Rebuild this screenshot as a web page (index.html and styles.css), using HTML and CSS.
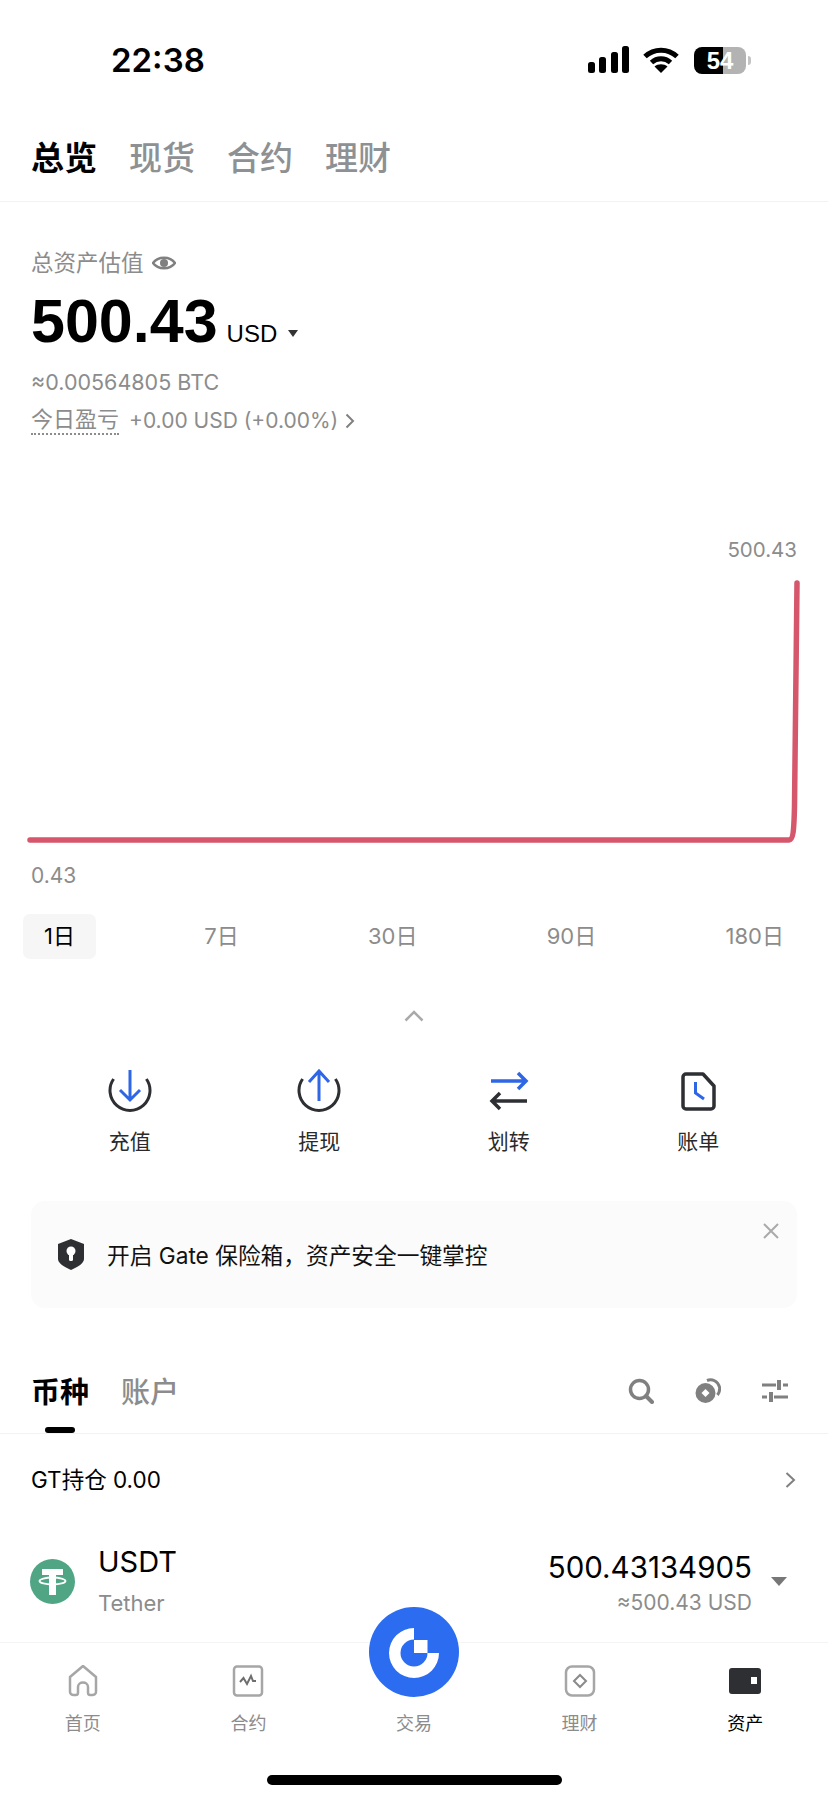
FILE: index.html
```html
<!DOCTYPE html>
<html lang="zh-CN">
<head>
  <meta charset="UTF-8" />
  <meta name="viewport" content="width=device-width, initial-scale=1.0" />
  <title>资产</title>
  <link rel="stylesheet" href="styles.css">
</head>
<body>
<div class="page">
  <div class="statusbar">
    <span class="time">22:38</span>
    <div class="status-icons">
      <svg class="signal" width="42" height="28" viewBox="0 0 42 28"><rect x="1" y="16" width="7" height="11" rx="2.5"/><rect x="12" y="11" width="7" height="16" rx="2.5"/><rect x="24" y="6" width="7" height="21" rx="2.5"/><rect x="35" y="0" width="7" height="27" rx="2.5"/></svg>
      <svg class="wifi" width="36" height="28" viewBox="0 0 36 28"><path d="M2 10.5C11 2 25 2 34 10.5" fill="none" stroke="#000" stroke-width="5"/><path d="M8.500 16.500C14 11.500 22 11.500 27.500 16.500" fill="none" stroke="#000" stroke-width="5"/><path d="M18 27L11.500 20.500C15 17.500 21 17.500 24.500 20.500Z"/></svg>
      <div class="battery">54</div>
      <div class="battery-cap"></div>
    </div>
  </div>

  <div class="top-tabs">
    <span class="active">总览</span>
    <span>现货</span>
    <span>合约</span>
    <span>理财</span>
  </div>

  <div class="summary">
    <div class="summary-label">总资产估值
      <svg width="24" height="16" viewBox="0 0 24 16"><path d="M1 8C6 1 18 1 23 8C18 15 6 15 1 8Z" fill="none" stroke="#808080" stroke-width="2.500"/><circle cx="12" cy="8" r="4" fill="#808080"/></svg>
    </div>
    <div class="balance"><span class="balance-num">500.43</span><span class="balance-unit">USD</span><i class="tri"></i></div>
    <div class="btc">≈0.00564805 BTC</div>
    <div class="pnl"><span class="pnl-label">今日盈亏</span><span class="pnl-val">+0.00 USD (+0.00%)</span>
      <svg width="10" height="16" viewBox="0 0 10 16"><path d="M1.500 1.500L8 8L1.500 14.500" fill="none" stroke="#808080" stroke-width="2"/></svg>
    </div>
  </div>

  <div class="chart-max">500.43</div>
  <svg class="chart" width="828" height="270" viewBox="0 0 828 270">
    <path d="M30 264H789C793 264 794 255 794.500 230C795.500 150 796.500 70 797 7" fill="none" stroke="#d6566b" stroke-width="5.500" stroke-linecap="round"/>
  </svg>
  <div class="chart-min">0.43</div>

  <div class="ranges">
    <span class="active">1日</span>
    <span>7日</span>
    <span>30日</span>
    <span>90日</span>
    <span>180日</span>
  </div>

  <svg class="collapse" width="20" height="12" viewBox="0 0 20 12"><path d="M1.500 10.500L10 2L18.500 10.500" fill="none" stroke="#aaa" stroke-width="2.500"/></svg>

  <div class="actions">
    <div class="action">
      <svg width="44" height="44" viewBox="0 0 44 44"><path d="M5.600 10A20 20 0 1 0 38.400 10" fill="none" stroke="#2d2f33" stroke-width="3"/><path d="M22 1V31M12 21L22 31L32 21" fill="none" stroke="#2e66e5" stroke-width="3"/></svg>
      <span>充值</span>
    </div>
    <div class="action">
      <svg width="44" height="44" viewBox="0 0 44 44"><path d="M5.600 10A20 20 0 1 0 38.400 10" fill="none" stroke="#2d2f33" stroke-width="3"/><path d="M22 32V2M12 13L22 2L32 13" fill="none" stroke="#2e66e5" stroke-width="3"/></svg>
      <span>提现</span>
    </div>
    <div class="action">
      <svg width="44" height="44" viewBox="0 0 44 44"><path d="M4 12H39M31 4L39 12L31 20" fill="none" stroke="#2e66e5" stroke-width="3.500"/><path d="M40 32H5M13 24L5 32L13 40" fill="none" stroke="#2d2f33" stroke-width="3.500"/></svg>
      <span>划转</span>
    </div>
    <div class="action">
      <svg width="44" height="44" viewBox="0 0 44 44"><path d="M10 5H27L38 17V37A3 3 0 0 1 35 40H10A3 3 0 0 1 7 37V8A3 3 0 0 1 10 5Z" fill="none" stroke="#2d2f33" stroke-width="3.500" stroke-linejoin="round"/><path d="M19.500 13V24L28 30" fill="none" stroke="#2e66e5" stroke-width="3"/></svg>
      <span>账单</span>
    </div>
  </div>

  <div class="banner">
    <svg class="shield" width="28" height="31" viewBox="0 0 28 31"><path d="M14 0L27 5V20C27 24 21 28 14 31C7 28 1 24 1 20V5Z" fill="#2d2f33"/><circle cx="14" cy="12" r="4.500" fill="#fff"/><rect x="12" y="12" width="4" height="10" rx="1.500" fill="#fff"/></svg>
    <span class="banner-text">开启 Gate 保险箱，资产安全一键掌控</span>
    <svg class="banner-close" width="16" height="16" viewBox="0 0 16 16"><path d="M1 1L15 15M15 1L1 15" stroke="#aaa" stroke-width="2"/></svg>
  </div>

  <div class="asset-head">
    <div class="asset-tab active">币种<i></i></div>
    <div class="asset-tab">账户</div>
    <div class="asset-tools">
      <svg width="26" height="26" viewBox="0 0 26 26"><circle cx="11.500" cy="11.500" r="9" fill="none" stroke="#808080" stroke-width="3.500"/><path d="M18 18L24 24" stroke="#808080" stroke-width="4" stroke-linecap="round"/></svg>
      <svg width="26" height="26" viewBox="0 0 26 26"><circle cx="10.500" cy="15" r="10" fill="#808080"/><path d="M10.500 11L14.500 15L10.500 19L6.500 15Z" fill="#fff"/><path d="M12 2.500C17 0.500 23 3 24.500 9C25 12 24 15 22.500 17" fill="none" stroke="#808080" stroke-width="3"/></svg>
      <svg width="26" height="26" viewBox="0 0 26 26"><path d="M0 7H14M21 7H26M0 19H5M12 19H26" stroke="#808080" stroke-width="3"/><rect x="15" y="2" width="4" height="10" fill="#808080"/><rect x="7" y="14" width="4" height="10" fill="#808080"/></svg>
    </div>
  </div>

  <div class="gt-row">
    <span>GT持仓 0.00</span>
    <svg width="11" height="16" viewBox="0 0 11 16"><path d="M1.500 1L9 8L1.500 15" fill="none" stroke="#808080" stroke-width="2"/></svg>
  </div>

  <div class="coin-row">
    <svg class="coin-logo" width="45" height="45" viewBox="0 0 45 45">
      <circle cx="22.500" cy="22.500" r="22.500" fill="#50a585"/>
      <path d="M12 10H33V16H26V36H19V16H12Z" fill="#fff"/>
      <ellipse cx="22.500" cy="22" rx="13" ry="3.500" fill="none" stroke="#fff" stroke-width="1.800"/>
    </svg>
    <div class="coin-names">
      <div class="coin-symbol">USDT</div>
      <div class="coin-name">Tether</div>
    </div>
    <div class="coin-amounts">
      <div class="coin-amount">500.43134905</div>
      <div class="coin-usd">≈500.43 USD</div>
    </div>
    <i class="coin-tri"></i>
  </div>

  <div class="tabbar">
    <div class="tabbar-items">
      <div class="tab-item">
        <svg width="32" height="32" viewBox="0 0 32 32"><path d="M3 27V12L16 1L29 12V27C29 29 27 30 25.500 30H23C21.500 30 21 29 21 27.500V22C21 16 11 16 11 22V27.500C11 29 10.500 30 9 30H6.500C5 30 3 29 3 27Z" fill="none" stroke="#a6a6a6" stroke-width="2.500" stroke-linejoin="round"/></svg>
        <span>首页</span>
      </div>
      <div class="tab-item">
        <svg width="32" height="32" viewBox="0 0 32 32"><rect x="2" y="1.500" width="28" height="29" rx="3" fill="none" stroke="#a6a6a6" stroke-width="2.500"/><path d="M8 17L11.500 13L15 19L19 11L21 16H24" fill="none" stroke="#6e6e6e" stroke-width="2"/></svg>
        <span>合约</span>
      </div>
      <div class="tab-item">
        <svg class="trade-btn" width="90" height="90" viewBox="0 0 90 90">
          <circle cx="45" cy="45" r="45" fill="#2b6cf0"/>
          <path d="M45 21A25 25 0 1 0 70 46H58.500A13.500 13.500 0 1 1 45 32.500Z" fill="#fff"/>
          <rect x="45" y="33" width="13.500" height="13" fill="#fff"/>
        </svg>
        <span>交易</span>
      </div>
      <div class="tab-item">
        <svg width="32" height="32" viewBox="0 0 32 32"><rect x="2" y="1.500" width="28" height="29" rx="6" fill="none" stroke="#a6a6a6" stroke-width="2.500"/><path d="M16 10L22 16L16 22L10 16Z" fill="none" stroke="#8a8a8a" stroke-width="2"/></svg>
        <span>理财</span>
      </div>
      <div class="tab-item active">
        <svg width="32" height="32" viewBox="0 0 32 32"><rect x="0" y="3" width="32" height="26" rx="3" fill="#2d2f33"/><rect x="22" y="12" width="6" height="7" fill="#fff"/></svg>
        <span>资产</span>
      </div>
    </div>
    <div class="home-bar"></div>
  </div>
</div>
</body>
</html>
```

FILE: styles.css
```css
* { box-sizing: border-box; }
body {
  margin: 0;
  background-color: #ffffff;
  color: #000000;
  font-family: Inter, 'Noto Sans CJK SC', sans-serif;
}
i { display: block; }
svg { display: block; flex-shrink: 0; }
.page {
  width: 828px;
  height: 1800px;
  display: flex;
  flex-direction: column;
  overflow: hidden;
}

/* status bar */
.statusbar {
  height: 120px;
  flex-shrink: 0;
  display: flex;
  justify-content: space-between;
  align-items: center;
  padding: 0 77px 0 111px;
}
.time { font-size: 33px; font-weight: 600; line-height: 1; }
.status-icons { display: flex; align-items: center; }
.signal { margin-right: 14px; }
.wifi { margin-right: 15px; }
.battery {
  width: 52px;
  height: 27px;
  border-radius: 8px;
  background: linear-gradient(90deg, #000 56%, #b3b3b3 56%);
  color: #fff;
  font: bold 24px/27px 'Liberation Sans', sans-serif;
  text-align: center;
}
.battery-cap {
  width: 3px;
  height: 9px;
  margin-left: 2px;
  border-radius: 0 3px 3px 0;
  background-color: #c4c4c4;
}

/* top tabs */
.top-tabs {
  height: 82px;
  flex-shrink: 0;
  display: flex;
  gap: 32px;
  padding: 22px 31px 0;
  border-bottom: 1px solid #f2f2f2;
  font-size: 33px;
  font-weight: 500;
  line-height: 1;
  color: #8e9194;
}
.top-tabs .active { color: #000; font-weight: 700; }

/* balance */
.summary { padding: 46px 31px 0; color: #8c8c8c; font-size: 21.5px; line-height: 30px; flex-shrink: 0; }
.summary-label { display: flex; align-items: center; gap: 8px; font-size: 22.5px; }
.balance {
  display: flex;
  align-items: baseline;
  margin-top: 13px;
  color: #000;
  font-family: 'Liberation Sans', sans-serif;
  line-height: 60px;
}
.balance-num { font-size: 61px; font-weight: 700; }
.balance-unit { font-size: 24px; margin-left: 9px; }
.tri {
  align-self: center;
  width: 0;
  height: 0;
  margin: 12px 0 0 11px;
  border-left: 5.5px solid transparent;
  border-right: 5.5px solid transparent;
  border-top: 7px solid #333;
}
.btc { margin-top: 3px; }
.pnl { display: flex; align-items: center; margin-top: 9px; }
.pnl-label { font-size: 22px; line-height: 27px; border-bottom: 2px dotted #8c8c8c; margin-top: -1px; }
.pnl-val { margin-left: 10px; margin-right: 7px; font-size: 21px; }

/* chart */
.chart-max { margin-top: 99px; padding-right: 31px; text-align: right; font-size: 20.5px; line-height: 30px; color: #8c8c8c; flex-shrink: 0; }
.chart { margin-top: 11px; }
.chart-min { margin-top: 15px; padding-left: 31px; font-size: 21px; line-height: 30px; color: #8c8c8c; flex-shrink: 0; }
.ranges {
  display: flex;
  justify-content: space-between;
  margin: 23px 23px 0 23px;
  color: #8c8c8c;
  font-size: 22px;
  flex-shrink: 0;
}
.ranges span { height: 45px; padding: 0 21px; line-height: 45px; border-radius: 7px; }
.ranges .active { background-color: #f6f6f6; color: #000; }
.collapse { margin: 51px auto 0; }

/* deposit, withdraw ... */
.actions {
  display: grid;
  grid-template-columns: repeat(4, 1fr);
  margin-top: 47px;
  padding: 0 35px;
  flex-shrink: 0;
}
.action { display: flex; flex-direction: column; align-items: center; gap: 15px; font-size: 21px; line-height: 28px; color: #2a2a2a; }

.banner {
  height: 107px;
  flex-shrink: 0;
  display: flex;
  align-items: center;
  margin: 45px 31px 0;
  padding: 0 18px 0 26px;
  border-radius: 14px;
  background-color: #fbfbfb;
}
.banner-text { flex: 1; margin-left: 22px; font-size: 22.7px; color: #111; }
.banner-close { align-self: flex-start; margin-top: 22px; }

/* assets */
.asset-head {
  display: flex;
  height: 64px;
  flex-shrink: 0;
  margin-top: 62px;
  padding: 8px 40px 0 31px;
  border-bottom: 1px solid #f2f2f2;
}
.asset-tab { font-size: 29px; line-height: 29px; font-weight: 500; color: #8c8c8c; margin-right: 32px; }
.asset-tab.active { color: #000; font-weight: 700; display: flex; flex-direction: column; align-items: center; }
.asset-tab i { width: 30px; height: 6px; margin-top: 20px; border-radius: 3px; background-color: #000; }
.asset-tools { display: flex; gap: 41px; margin-left: auto; }
.gt-row {
  display: flex;
  justify-content: space-between;
  align-items: center;
  margin-top: 31px;
  padding: 0 32px 0 31px;
  font-size: 22.5px;
  line-height: 30px;
  flex-shrink: 0;
}
.coin-row { display: flex; align-items: center; margin-top: 50px; padding: 0 41px 0 30px; flex-shrink: 0; }
.coin-names { margin-left: 23px; }
.coin-symbol { font-size: 29px; line-height: 34px; }
.coin-name { margin-top: 9px; font-size: 22px; line-height: 30px; color: #8c8c8c; }
.coin-amounts { margin-left: auto; padding-top: 5px; text-align: right; }
.coin-amount { font-size: 29.5px; line-height: 34px; }
.coin-usd { margin-top: 4px; font-size: 21px; line-height: 30px; color: #8c8c8c; }
.coin-tri {
  margin-left: 19px;
  width: 0;
  height: 0;
  border-left: 8px solid transparent;
  border-right: 8px solid transparent;
  border-top: 9px solid #777;
}

/* bottom nav */
.tabbar { margin-top: auto; height: 158px; flex-shrink: 0; border-top: 1px solid #f4f4f4; background-color: #fff; }
.tabbar-items { display: grid; grid-template-columns: repeat(5, 1fr); padding-top: 22px; }
.tab-item { display: flex; flex-direction: column; align-items: center; font-size: 18px; line-height: 26px; color: #8c8c8c; }
.tab-item span { margin-top: 14px; }
.tab-item.active { color: #000; }
.trade-btn { margin-top: -58px; }
.home-bar { width: 295px; height: 10px; margin: 38px auto 0; border-radius: 5px; background-color: #000; }
```
